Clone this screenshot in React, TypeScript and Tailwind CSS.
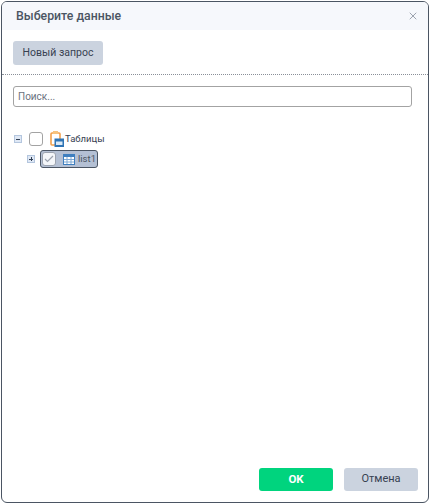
import { X } from "lucide-react";

function PlusMinus({ plus }: { plus?: boolean }) {
  return (
    <span className="relative flex size-2 shrink-0 items-center justify-center border border-[#b4c6de] bg-[#dfe8f5]">
      <span className="h-px w-1 shrink-0 bg-[#334155]" />
      {plus && <span className="absolute h-1 w-px bg-[#334155]" />}
    </span>
  );
}

function FolderIcon() {
  return (
    <svg width="14" height="16" viewBox="0 0 14 16" className="block shrink-0">
      <rect x="1" y="2" width="9" height="12" rx="1" fill="#fff" stroke="#f2a04c" strokeWidth="1.6" />
      <rect x="3" y="0" width="5" height="3" fill="#f7c37e" />
      <rect x="4.5" y="7.5" width="9.5" height="8.5" fill="#2f74b5" />
      <rect x="6" y="10.5" width="6.5" height="3.5" fill="#dbe9f6" />
    </svg>
  );
}

function TableIcon() {
  return (
    <svg width="12" height="11" viewBox="0 0 12 11" className="block shrink-0">
      <rect x="0.5" y="0.5" width="11" height="10" fill="#fff" stroke="#3f7fbf" />
      <rect x="1" y="1" width="10" height="2" fill="#3f7fbf" />
      <path d="M1 5.5H11M1 8H11M4 3V10M8 3V10" stroke="#7fa9d4" strokeWidth="1" fill="none" />
    </svg>
  );
}

export default function App() {
  return (
    <div className="h-[504px] w-[431px] bg-white p-px font-['Roboto',sans-serif]">
      <div className="flex h-[502px] w-[428px] flex-col overflow-hidden rounded-md border border-[#4b5563] bg-white">
        <div className="flex h-[28px] shrink-0 items-center justify-between bg-[#f6f8fc] pl-[14px] pr-[9px]">
          <h1 className="text-[12.3px] font-medium text-[#4b5563]">Выберите данные</h1>
          <X className="size-3 text-[#9ca3af]" strokeWidth={2} />
        </div>
        <div className="flex border-b border-dotted border-[#8a8f98] px-[11px] pb-[9px] pt-[11px]">
          <button className="h-6 w-[90px] rounded-[3px] bg-[#cbd3df] text-[10.5px] text-[#374151]">Новый запрос</button>
        </div>
        <div className="flex px-[11px] pt-[11px]">
          <input
            placeholder="Поиск..."
            className="h-[21px] w-[399px] rounded-[3px] border border-[#a3a3a3] px-1 text-[10px] outline-none placeholder:text-[#6b7280]"
          />
        </div>
        <div className="flex flex-col pl-3 pt-[23px]">
          <div className="flex h-[18px] items-center">
            <PlusMinus />
            <span className="ml-[7px] size-[14px] shrink-0 rounded-[3px] border border-[#a3a3a3] bg-white" />
            <span className="ml-[7px]"><FolderIcon /></span>
            <span className="ml-px text-[9.5px] text-[#374151]">Таблицы</span>
          </div>
          <div className="mt-[2px] flex h-[18px] items-center pl-[13px]">
            <PlusMinus plus />
            <div className="ml-[5px] flex h-[18px] w-[58px] items-center rounded-[3px] border border-[#4b5563] bg-[#b4c0d4] pl-px">
              <span className="flex size-[14px] items-center justify-center rounded-[3px] border border-[#9ca3af] bg-[#f4f6f9]">
                <svg width="10" height="8" viewBox="0 0 10 8">
                  <path d="M1 4L3.5 6.5L9 1" stroke="#9ca3af" strokeWidth="1.2" fill="none" />
                </svg>
              </span>
              <span className="ml-[7px]"><TableIcon /></span>
              <span className="ml-[3px] text-[9.5px] text-[#4b5563]">list1</span>
            </div>
          </div>
        </div>
        <div className="mt-auto flex justify-end gap-[11px] pb-[11px] pr-[10px]">
          <button className="h-[23px] w-[74px] rounded-[3px] bg-[#00d47e] text-[11.5px] font-bold text-white">OK</button>
          <button className="h-[23px] w-[74px] rounded-[3px] bg-[#cbd3df] text-[11px] text-[#374151]">Отмена</button>
        </div>
      </div>
    </div>
  );
}
